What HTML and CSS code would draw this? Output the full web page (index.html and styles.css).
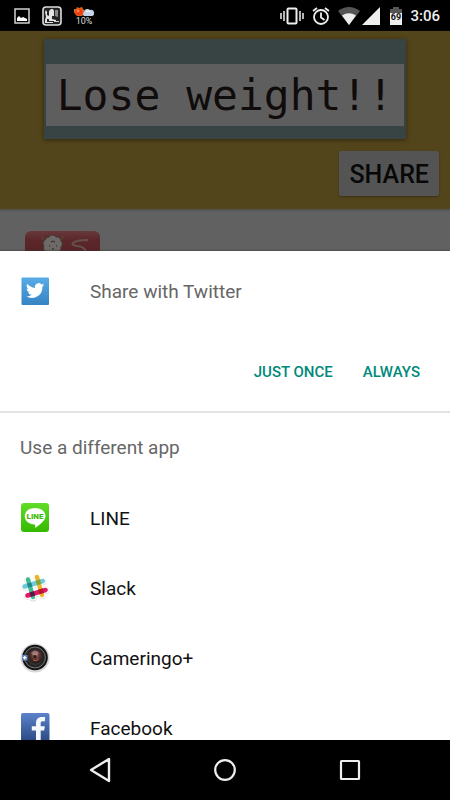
FILE: index.html
```
<!DOCTYPE html>
<html lang="en">

<head>
    <meta charset="UTF-8">
    <meta name="viewport" content="width=device-width, initial-scale=1.0">
    <title>Share with Twitter</title>
    <link rel="stylesheet" href="styles.css">
</head>

<body>
    <div class="screen">
        <header class="status-bar">
            <div class="status-left">
                <svg class="status-icon" width="16" height="16" viewBox="0 0 16 16">
                    <rect x="1" y="1" width="14" height="14" fill="none" stroke="#e0e0e0" stroke-width="1.4"/>
                    <path d="M3 13V10l2-2 2 2 2-1 2 1 2 1v2z" fill="#fff"/>
                </svg>
                <svg class="status-icon" width="20" height="20" viewBox="0 0 20 20">
                    <rect x="1" y="1" width="18" height="18" rx="3" fill="#222" stroke="#ddd" stroke-width="1.6"/>
                    <path d="M3 6l1-2 1 2v3l2 1V5l2-2h2l1 2v5h-2v3l4 1v1H7v-2H5v3h6v1H3v-3l1-3z" fill="#e4e4e4"/>
                    <path d="M13 4h3v7l-3-1z" fill="#888"/>
                    <path d="M12 15h5v1h-5z" fill="#ccc"/>
                </svg>
                <div class="weather">
                    <svg width="20" height="10" viewBox="0 0 20 10">
                        <path d="M0 2l2 0 1-2 2 1 3-1 1 2 2 2-1 3-2 2-3 0-2 0-2-2-1-2z" fill="#d96a20"/>
                        <circle cx="5" cy="5" r="3.6" fill="#f03a12"/>
                        <circle cx="4" cy="4" r="1.4" fill="#ff8b50"/>
                        <path d="M10 9a2.5 2.5 0 0 1 0-4 3.5 3.5 0 0 1 6-2 2.500 2.500 0 0 1 2 6z" fill="#c4d3e8"/>
                        <path d="M12 5q2-2 4 0" fill="none" stroke="#fff"/>
                    </svg>
                    <span class="weather-text">10%</span>
                </div>
            </div>
            <div class="status-right">
                <svg width="24" height="18" viewBox="0 0 24 18">
                    <rect x="7.500" y="1.500" width="9" height="15" rx="1" fill="none" stroke="#eee" stroke-width="2"/>
                    <path d="M4 4v10M1 6v6M20 4v10M23 6v6" stroke="#eee" stroke-width="1.500"/>
                </svg>
                <svg width="18" height="18" viewBox="0 0 18 18" fill="none" stroke="#eee" stroke-width="1.800">
                    <circle cx="9" cy="10" r="7"/>
                    <path d="M9 5.500V10.500l3.500 2.500M1 4l4-3M17 4l-4-3"/>
                </svg>
                <svg class="wifi" width="22" height="18" viewBox="0 0 22 18">
                    <path d="M0 4Q11-4 22 4L11 18z" fill="#555"/>
                    <path d="M4 8.500Q11 4 18 8.500L11 18z" fill="#eee"/>
                </svg>
                <svg width="18" height="18" viewBox="0 0 18 18">
                    <path d="M18 0v18H0z" fill="#eee"/>
                </svg>
                <svg class="battery" width="12" height="18" viewBox="0 0 12 18">
                    <path d="M0 2h3V0h6v2h3v5H0z" fill="#555"/>
                    <path d="M0 6h12v12H0z" fill="#eee"/>
                    <text x="6" y="13" text-anchor="middle" class="battery-text">69</text>
                </svg>
                <time class="clock">3:06</time>
            </div>
        </header>

        <main class="page">
            <section class="hero">
                <div class="banner">
                    <h1 class="banner-title">Lose weight!!</h1>
                </div>
                <button type="button" class="share-button">SHARE</button>
            </section>
            <section class="feed">
                <svg class="feed-icon" width="76" height="60" viewBox="0 0 76 60">
                    <defs>
                        <linearGradient id="red" x1="0" y1="0" x2="0" y2="1">
                            <stop offset="0" stop-color="#67383b"/>
                            <stop offset="0.15" stop-color="#5b272b"/>
                            <stop offset="1" stop-color="#4c171b"/>
                        </linearGradient>
                    </defs>
                    <rect width="75" height="60" rx="6" fill="url(#red)"/>
                    <path d="M19 9q-3-3-1-4M36 9q3-3 1-4" fill="none" stroke="#59402f" stroke-width="2"/>
                    <path d="M20 9a4 4 0 0 1 4-3 4 4 0 0 1 7 0 4 4 0 0 1 5 4 4 4 0 0 1 0 6 4 4 0 0 1-3 5H22a4 4 0 0 1-3-6 4 4 0 0 1 1-6z" fill="#6c6967" stroke="#443330"/>
                    <path d="M24 15h1M31 15h1M27 18h2M26 11q2-2 4 0" stroke="#35201f" fill="none"/>
                    <path d="M63 9q-12 0-15 3-2 2 4 3 9 1 9 7" fill="none" stroke="#66504c" stroke-width="2"/>
                </svg>
            </section>
        </main>

        <section class="sheet">
            <div class="preferred">
                <button type="button" class="app-row">
                    <svg class="app-icon" viewBox="0 0 30 30">
                        <defs>
                            <linearGradient id="sky" x1="0" y1="0" x2="0" y2="1">
                                <stop offset="0" stop-color="#57ace6"/>
                                <stop offset="1" stop-color="#3683c4"/>
                            </linearGradient>
                        </defs>
                        <rect x="1.500" y="1.500" width="27.500" height="27.500" rx="1" fill="url(#sky)"/>
                        <path transform="translate(6 5.500) scale(.76)" fill="#fff" d="M24 4.600a10 10 0 0 1-2.800.8 5 5 0 0 0 2.100-2.700 10 10 0 0 1-3.100 1.200 4.900 4.900 0 0 0-8.400 4.500A14 14 0 0 1 1.700 3.100a4.900 4.900 0 0 0 1.500 6.600 4.900 4.900 0 0 1-2.200-.6 4.900 4.900 0 0 0 3.900 4.900 5 5 0 0 1-2.200.1 4.900 4.900 0 0 0 4.600 3.400A9.900 9.900 0 0 1 0 19.500 14 14 0 0 0 21.500 7.100 10 10 0 0 0 24 4.600z"/>
                    </svg>
                    <span>Share with Twitter</span>
                </button>
                <div class="actions">
                    <button type="button" class="action">JUST ONCE</button>
                    <button type="button" class="action">ALWAYS</button>
                </div>
            </div>

            <h2 class="list-title">Use a different app</h2>
            <ul class="app-list">
                <li>
                    <button type="button" class="app-row">
                        <svg class="app-icon" viewBox="0 0 30 30">
                            <defs>
                                <linearGradient id="lime" x1="0" y1="0" x2="0" y2="1">
                                    <stop offset="0" stop-color="#62dd27"/>
                                    <stop offset="1" stop-color="#35b900"/>
                                </linearGradient>
                            </defs>
                            <rect x="1" y="0" width="28" height="29" rx="3" fill="url(#lime)"/>
                            <path d="M15 5c6 0 10.500 3.500 10.500 8.200 0 4-4.500 7.500-10.500 11.800.5-1.500.5-3-.5-3.400C9 21.200 4.800 18 4.800 13.200 4.800 8.500 9 5 15 5z" fill="#fff"/>
                            <text x="15" y="16" text-anchor="middle" class="line-text">LINE</text>
                        </svg>
                        <span>LINE</span>
                    </button>
                </li>
                <li>
                    <button type="button" class="app-row">
                        <svg class="app-icon" viewBox="0 0 30 30" fill="none" stroke-linecap="round">
                            <g transform="translate(0 1.500)">
                                <path d="M8 5.500l5 18M17 3l5 18M4.500 12.500l18.500-5.500M7.500 21.500l18-5.500" stroke="#ddd" stroke-width="7.500"/>
                                <path d="M8 5l5 17.500M17 2.500l5 18M4.500 12l18.500-5.500M7.500 21l18-5.500" stroke="#fff" stroke-width="7"/>
                                <path d="M8 5l5 17.500" stroke="#3eb991" stroke-width="4.500"/>
                                <path d="M17 2.500l5 18" stroke="#ecb32d" stroke-width="4.500"/>
                                <path d="M4.500 12l18.500-5.500" stroke="#70cadb" stroke-width="4.500"/>
                                <path d="M7.500 21l18-5.500" stroke="#e01765" stroke-width="4.500"/>
                                <g stroke-linecap="butt" stroke-width="4.500">
                                    <path d="M7.500 11.100l4.300-1.300" stroke="#1d8a83"/>
                                    <path d="M16.300 8.500l4.300-1.300" stroke="#86a32c"/>
                                    <path d="M10.200 20.200l4.300-1.300" stroke="#472042"/>
                                    <path d="M18.900 17.500l4.300-1.300" stroke="#b01c22"/>
                                </g>
                            </g>
                        </svg>
                        <span>Slack</span>
                    </button>
                </li>
                <li>
                    <button type="button" class="app-row">
                        <svg class="app-icon" viewBox="0 0 30 30">
                            <defs>
                                <radialGradient id="lens" cx="0.5" cy="0.4" r="0.6">
                                    <stop offset="0" stop-color="#a5766c"/>
                                    <stop offset="0.5" stop-color="#5b3330"/>
                                    <stop offset="1" stop-color="#1d1616"/>
                                </radialGradient>
                            </defs>
                            <circle cx="15" cy="15" r="14.500" fill="#d7d7d7"/>
                            <circle cx="15" cy="14.500" r="12.800" fill="#111"/>
                            <circle cx="15" cy="14.500" r="10.500" fill="#333" stroke="#707070"/>
                            <circle cx="15" cy="14.500" r="8.500" fill="none" stroke="#222" stroke-width="1.500"/>
                            <circle cx="15.500" cy="13.500" r="7" fill="url(#lens)"/>
                            <path d="M11 10q4-5 8 0l-2 2h-4z" fill="#c5aaa5" opacity=".5"/>
                            <circle cx="15" cy="13.500" r="1.500" fill="#2a1515"/>
                            <path d="M13 17q3 2 6-1" stroke="#a4604e" fill="none"/>
                            <rect x="2" y="12" width="5.500" height="5.500" fill="#6688be"/>
                            <path d="M4.700 13v3.500M3 14.700h3.500" stroke="#fff" stroke-width="1.300"/>
                        </svg>
                        <span>Cameringo+</span>
                    </button>
                </li>
                <li>
                    <button type="button" class="app-row">
                        <svg class="app-icon" viewBox="0 0 30 30">
                            <defs>
                                <linearGradient id="navy" x1="0" y1="0" x2="0" y2="1">
                                    <stop offset="0" stop-color="#5b83cb"/>
                                    <stop offset="1" stop-color="#28457f"/>
                                </linearGradient>
                            </defs>
                            <rect x="1" y="0" width="28.500" height="30" rx="2" fill="url(#navy)"/>
                            <path d="M16 30V17.500h-4.200v-4.300H16V10c0-4 2.500-6 6-6h3v4.300h-2.300c-1.600 0-2 .8-2 2v2.900h4.100l-.6 4.300h-3.500V30z" fill="#f4f7fc"/>
                        </svg>
                        <span>Facebook</span>
                    </button>
                </li>
            </ul>
        </section>

        <nav class="nav-bar">
            <button type="button" class="nav-button" aria-label="Back">
                <svg width="24" height="26" viewBox="0 0 24 26">
                    <path d="M21 2v22L3 13z" fill="none" stroke="#eee" stroke-width="2.400" stroke-linejoin="round"/>
                </svg>
            </button>
            <button type="button" class="nav-button" aria-label="Home">
                <svg width="24" height="24" viewBox="0 0 24 24">
                    <circle cx="12" cy="12" r="9.800" fill="none" stroke="#eee" stroke-width="2.200"/>
                </svg>
            </button>
            <button type="button" class="nav-button" aria-label="Recent apps">
                <svg width="24" height="24" viewBox="0 0 24 24">
                    <rect x="3" y="3" width="18" height="18" rx="0.500" fill="none" stroke="#eee" stroke-width="2.200"/>
                </svg>
            </button>
        </nav>
    </div>
</body>

</html>
```
FILE: styles.css
```
* {
    box-sizing: border-box;
}

body {
    margin: 0;
    background: #000;
    font-family: Roboto, "Liberation Sans", sans-serif;
}

button {
    border: none;
    padding: 0;
    background: none;
    font-family: inherit;
    cursor: pointer;
}

svg {
    display: block;
    flex: none;
}

.screen {
    display: flex;
    flex-direction: column;
    height: 100vh;
    overflow: hidden;
}

/* status bar */
.status-bar {
    display: flex;
    flex: none;
    justify-content: space-between;
    padding: 6px 10px 6px 14px;
    background: #000;
}

.status-left,
.status-right {
    display: flex;
    align-items: center;
    height: 19px;
}

.status-left {
    gap: 12px;
}

.status-right {
    gap: 8px;
}

.weather {
    display: flex;
    flex-direction: column;
    align-items: center;
}

.weather-text {
    color: #ddd;
    font-size: 9px;
    line-height: 8px;
}

.wifi {
    margin-right: -6px;
}

.battery {
    margin-left: 2px;
}

.battery-text {
    fill: #111;
    font-size: 9px;
    font-weight: 700;
}

.clock {
    color: #eee;
    font-size: 15px;
    font-weight: 500;
}

/* dimmed page behind the sheet */
.page {
    flex: none;
    background: #616161;
}

.hero {
    display: flex;
    flex-direction: column;
    align-items: center;
    gap: 12px;
    padding: 8px 11px 13px;
    background: #52441b;
    box-shadow: 0 1px 2px #494949;
}

.banner {
    width: 100%;
    max-width: 362px;
    padding: 25px 2px 13px;
    background: #384443;
    box-shadow: 0 1px 4px #302710;
}

.banner-title {
    margin: 0;
    background: #5f5e5e;
    color: #110c0c;
    font-family: "DejaVu Sans Mono", monospace;
    font-size: 43px;
    font-weight: 400;
    line-height: 62px;
    text-align: center;
}

.share-button {
    align-self: flex-end;
    padding: 2px 10px 0;
    border-radius: 2px;
    background: #545454;
    box-shadow: 0 1px 2px #3a3013;
    color: #080808;
    font-size: 25px;
    font-weight: 500;
    line-height: 43px;
}

.feed {
    height: 42px;
    padding: 22px 25px 0;
    overflow: hidden;
}

/* share sheet */
.sheet {
    flex: 1;
    min-height: 0;
    overflow: hidden;
    background: #fff;
    box-shadow: 0 0 2px #333;
}

.preferred {
    padding-top: 5px;
    border-bottom: 2px solid #e3e3e3;
}

.app-row {
    display: flex;
    align-items: center;
    gap: 40px;
    width: 100%;
    height: 70px;
    padding: 0 20px;
    color: #111;
    font-size: 19px;
    text-align: left;
}

.preferred .app-row {
    color: #666;
}

.app-icon {
    width: 30px;
    height: 30px;
}

.line-text {
    fill: #3fbd0d;
    font-size: 8px;
    font-weight: 900;
}

.actions {
    display: flex;
    justify-content: flex-end;
    gap: 30px;
    padding: 8px 30px 2px;
}

.action {
    height: 75px;
    color: #00897b;
    font-size: 15px;
    font-weight: 500;
}

.list-title {
    margin: 0;
    padding: 0 20px;
    color: #666;
    font-size: 19px;
    font-weight: 400;
    line-height: 70px;
}

.app-list {
    margin: 0;
    padding: 0;
    list-style: none;
}

/* navigation bar */
.nav-bar {
    display: flex;
    flex: none;
    justify-content: center;
    gap: 65px;
    background: #000;
}

.nav-button {
    display: flex;
    align-items: center;
    justify-content: center;
    width: 60px;
    height: 60px;
}
```
